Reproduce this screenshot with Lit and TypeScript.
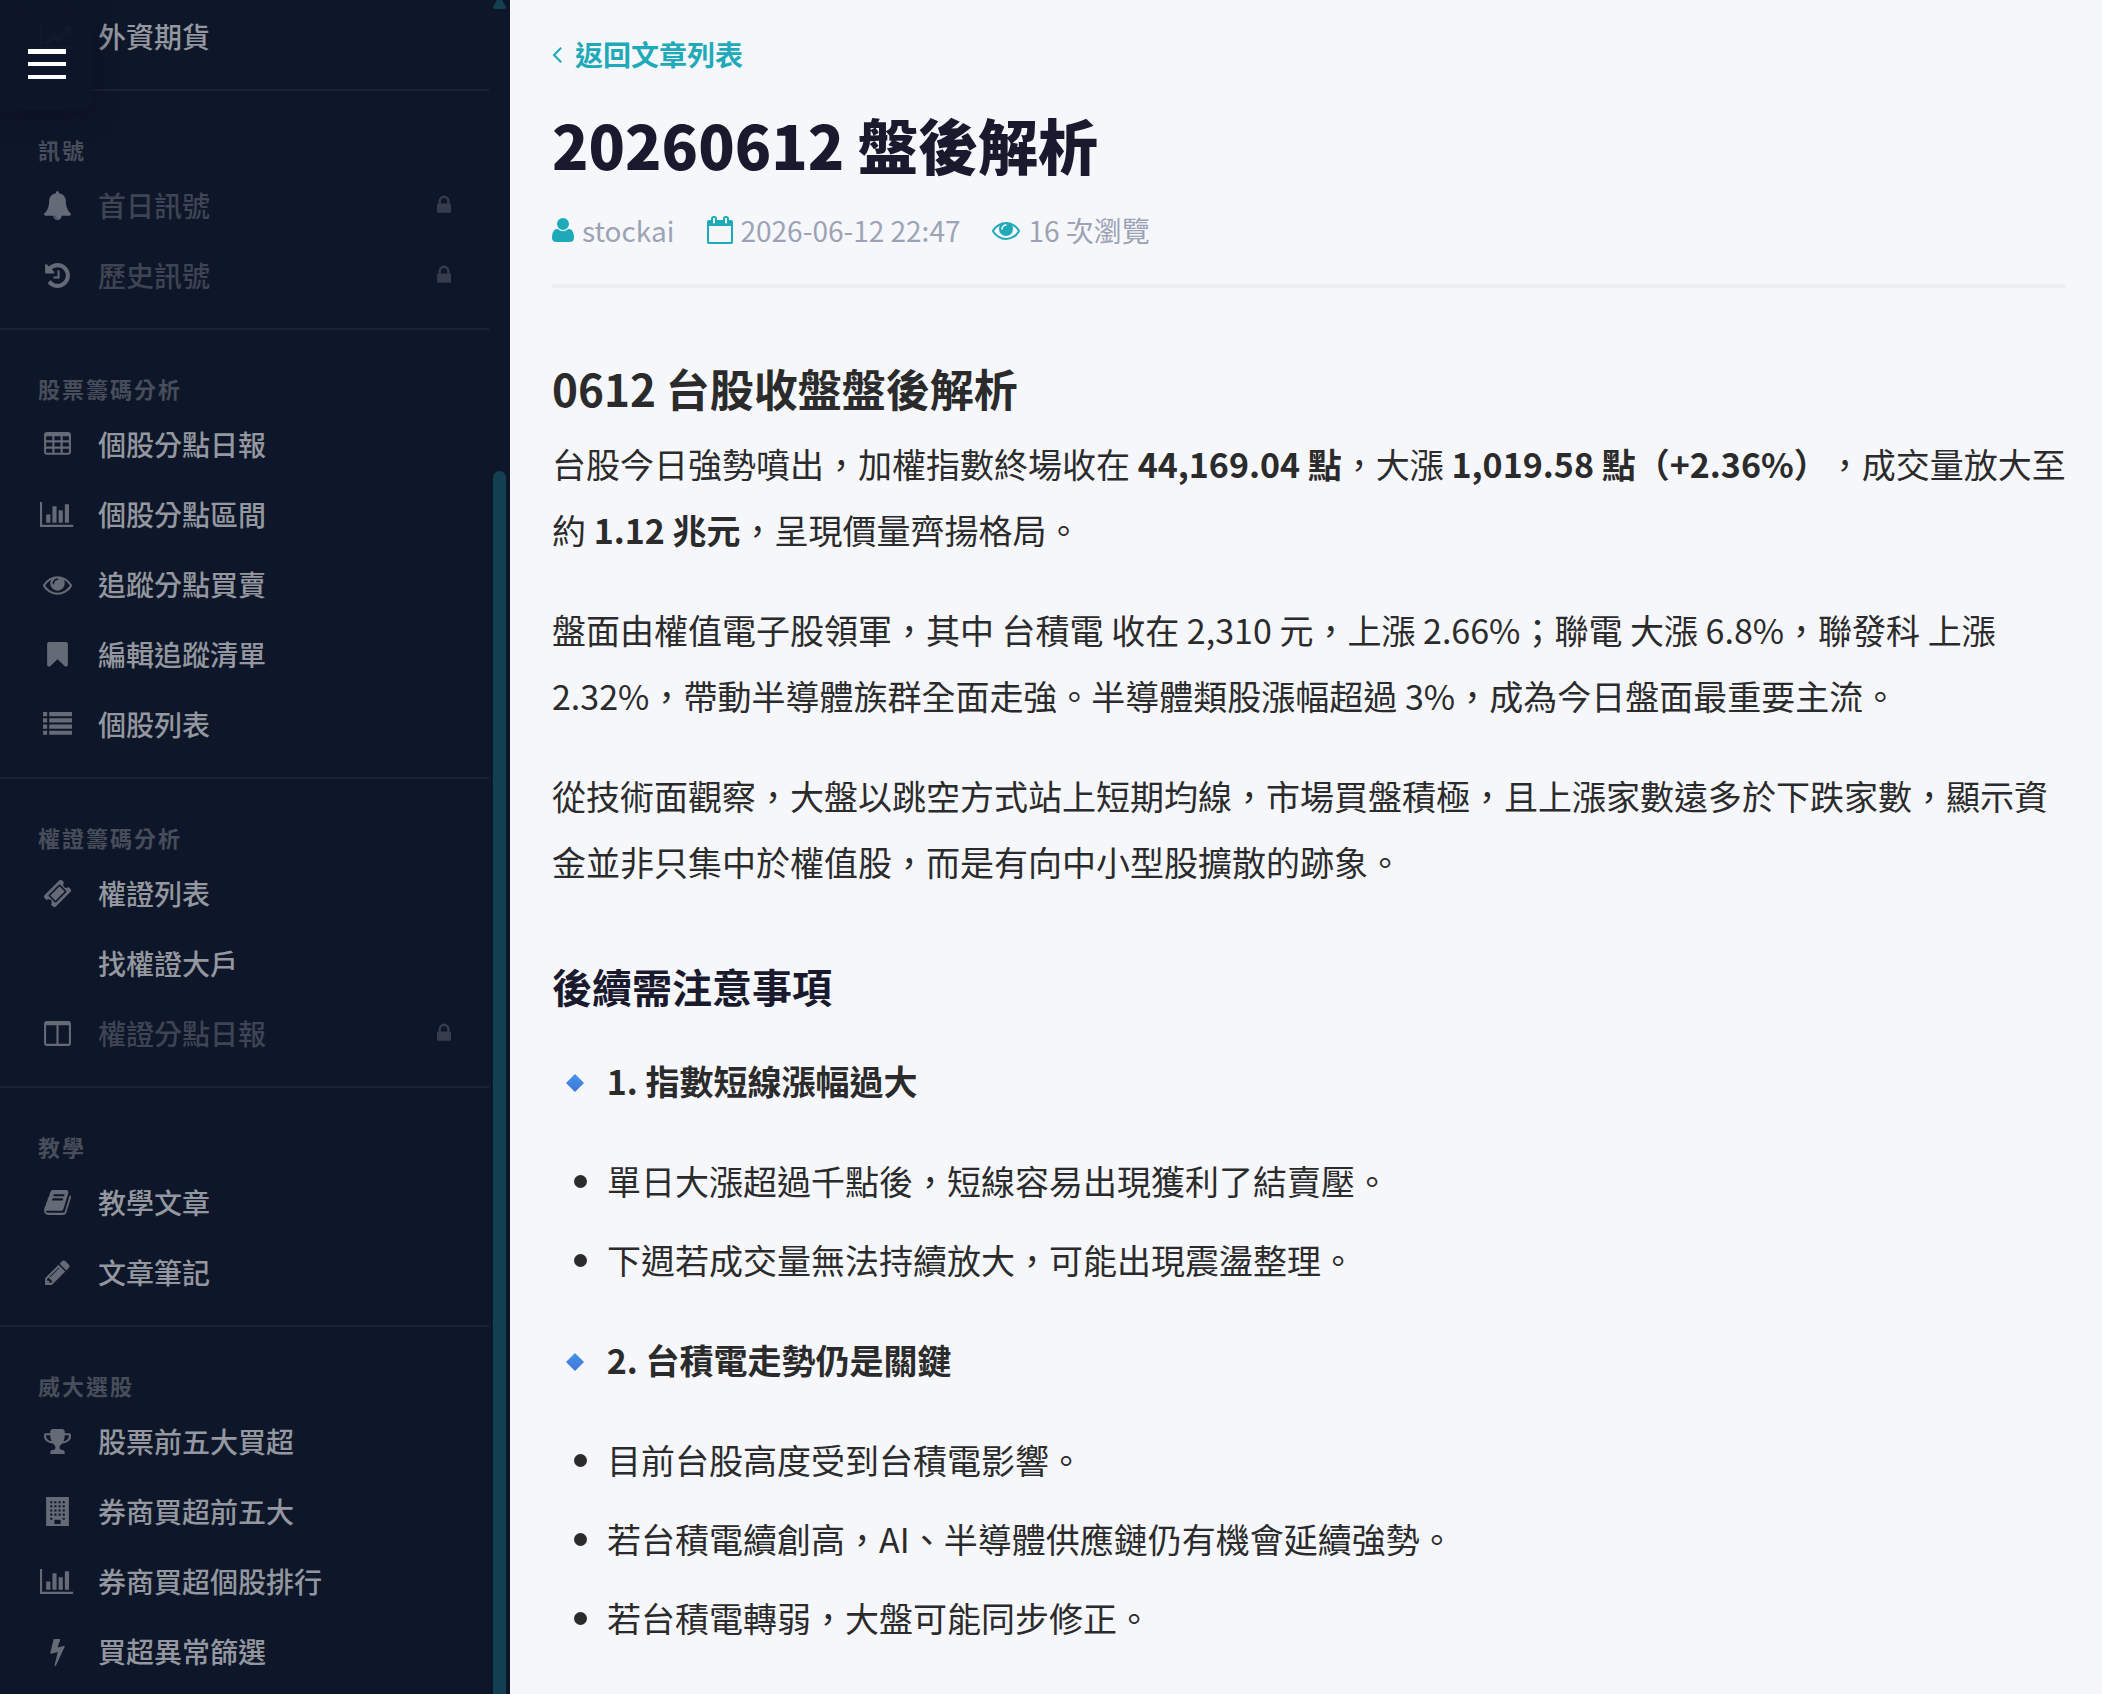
import { LitElement, html, svg, css, nothing } from "lit";
import { customElement, property } from "lit/decorators.js";

/* Each icon: [viewBox x, viewBox width, path]; all share a height of 1792 units per em. */
const ICONS: Record<string, [number, number, string]> = {
  line: [0, 2048, "M2048 1536v128h-2048v-1536h128v1408h1920zm-128-1248v435q0 21-19.5 29.5t-35.5-7.5l-121-121-633 633q-10 10-23 10t-23-10l-233-233-416 416-192-192 585-585q10-10 23-10t23 10l233 233 464-464-121-121q-16-16-7.5-35.5t29.5-19.5h435q14 0 23 9t9 23z"],
  bell: [0, 1792, "M912 1696q0-16-16-16-59 0-101.5-42.5t-42.5-101.5q0-16-16-16t-16 16q0 73 51.5 124.5t124.5 51.5q16 0 16-16zm816-288q0 52-38 90t-90 38h-448q0 106-75 181t-181 75-181-75-75-181h-448q-52 0-90-38t-38-90q50-42 91-88t85-119.5 74.5-158.5 50-206 19.5-260q0-152 117-282.5t307-158.5q-8-19-8-39 0-40 28-68t68-28 68 28 28 68q0 20-8 39 190 28 307 158.5t117 282.5q0 139 19.5 260t50 206 74.5 158.5 85 119.5 91 88z"],
  history: [0, 1792, "M1664 896q0 156-61 298t-164 245-245 164-298 61q-172 0-327-72.5t-264-204.5q-7-10-6.5-22.5t8.5-20.5l137-138q10-9 25-9 16 2 23 12 73 95 179 147t225 52q104 0 198.5-40.5t163.5-109.5 109.5-163.5 40.5-198.5-40.5-198.5-109.5-163.5-163.5-109.5-198.5-40.5q-98 0-188 35.5t-160 101.5l137 138q31 30 14 69-17 40-59 40h-448q-26 0-45-19t-19-45v-448q0-42 40-59 39-17 69 14l130 129q107-101 244.5-156.5t284.5-55.5q156 0 298 61t245 164 164 245 61 298zm-640-288v448q0 14-9 23t-23 9h-320q-14 0-23-9t-9-23v-64q0-14 9-23t23-9h224v-352q0-14 9-23t23-9h64q14 0 23 9t9 23z"],
  lock: [320, 1152, "M640 768h512v-192q0-106-75-181t-181-75-181 75-75 181v192zm832 96v576q0 40-28 68t-68 28h-960q-40 0-68-28t-28-68v-576q0-40 28-68t68-28h32v-192q0-184 132-316t316-132 316 132 132 316v192h32q40 0 68 28t28 68z"],
  table: [0, 1792, "M576 1376v-192q0-14-9-23t-23-9h-320q-14 0-23 9t-9 23v192q0 14 9 23t23 9h320q14 0 23-9t9-23zm0-384v-192q0-14-9-23t-23-9h-320q-14 0-23 9t-9 23v192q0 14 9 23t23 9h320q14 0 23-9t9-23zm512 384v-192q0-14-9-23t-23-9h-320q-14 0-23 9t-9 23v192q0 14 9 23t23 9h320q14 0 23-9t9-23zm-512-768v-192q0-14-9-23t-23-9h-320q-14 0-23 9t-9 23v192q0 14 9 23t23 9h320q14 0 23-9t9-23zm512 384v-192q0-14-9-23t-23-9h-320q-14 0-23 9t-9 23v192q0 14 9 23t23 9h320q14 0 23-9t9-23zm512 384v-192q0-14-9-23t-23-9h-320q-14 0-23 9t-9 23v192q0 14 9 23t23 9h320q14 0 23-9t9-23zm-512-768v-192q0-14-9-23t-23-9h-320q-14 0-23 9t-9 23v192q0 14 9 23t23 9h320q14 0 23-9t9-23zm512 384v-192q0-14-9-23t-23-9h-320q-14 0-23 9t-9 23v192q0 14 9 23t23 9h320q14 0 23-9t9-23zm0-384v-192q0-14-9-23t-23-9h-320q-14 0-23 9t-9 23v192q0 14 9 23t23 9h320q14 0 23-9t9-23zm128-320v1088q0 66-47 113t-113 47h-1344q-66 0-113-47t-47-113v-1088q0-66 47-113t113-47h1344q66 0 113 47t47 113z"],
  bars: [0, 2048, "M640 896v512h-256v-512h256zm384-512v1024h-256v-1024h256zm1024 1152v128h-2048v-1536h128v1408h1920zm-640-896v768h-256v-768h256zm384-384v1152h-256v-1152h256z"],
  eye: [0, 1792, "M1664 960q-152-236-381-353 61 104 61 225 0 185-131.5 316.5t-316.5 131.5-316.5-131.5-131.5-316.5q0-121 61-225-229 117-381 353 133 205 333.5 326.5t434.5 121.5 434.5-121.5 333.5-326.5zm-720-384q0-20-14-34t-34-14q-125 0-214.5 89.5t-89.5 214.5q0 20 14 34t34 14 34-14 14-34q0-86 61-147t147-61q20 0 34-14t14-34zm848 384q0 34-20 69-140 230-376.5 368.5t-499.5 138.5-499.5-139-376.5-368q-20-35-20-69t20-69q140-229 376.5-368t499.5-139 499.5 139 376.5 368q20 35 20 69z"],
  bookmark: [0, 1792, "M1420 128q23 0 44 9 33 13 52.5 41t19.5 62v1289q0 34-19.5 62t-52.5 41q-19 8-44 8-48 0-83-32l-441-424-441 424q-36 33-83 33-23 0-44-9-33-13-52.5-41t-19.5-62v-1289q0-34 19.5-62t52.5-41q21-9 44-9h1048z"],
  list: [0, 1792, "M0 128h256v256h-256zM384 128h1408v256h-1408zM0 512h256v256h-256zM384 512h1408v256h-1408zM0 896h256v256h-256zM384 896h1408v256h-1408zM0 1280h256v256h-256zM384 1280h1408v256h-1408z"],
  ticket: [0, 1792, "M1024 452l316 316-572 572-316-316zm-211 979l618-618q19-19 19-45t-19-45l-362-362q-18-18-45-18t-45 18l-618 618q-19 19-19 45t19 45l362 362q18 18 45 18t45-18zm889-637l-907 908q-37 37-90.5 37t-90.5-37l-126-126q56-56 56-136t-56-136-136-56-136 56l-125-126q-37-37-37-90.5t37-90.5l907-906q37-37 90.5-37t90.5 37l125 125q-56 56-56 136t56 136 136 56 136-56l126 125q37 37 37 90.5t-37 90.5z"],
  columns: [0, 1792, "M224 1536h608v-1152h-640v1120q0 13 9.5 22.5t22.5 9.5zm1376-32v-1120h-640v1152h608q13 0 22.5-9.5t9.5-22.5zm128-1216v1216q0 66-47 113t-113 47h-1344q-66 0-113-47t-47-113v-1216q0-66 47-113t113-47h1344q66 0 113 47t47 113z"],
  book: [0, 1792, "M1703 478q40 57 18 129l-275 906q-19 64-76.5 107.5t-122.5 43.5h-923q-77 0-148.5-53.5t-99.5-131.5q-24-67-2-127 0-4 3-27t4-37q1-8-3-21.5t-3-19.5q2-11 8-21t16.5-23.5 16.5-23.5q23-38 45-91.5t30-91.5q3-10 .5-30t-.5-28q3-11 17-28t17-23q21-36 42-92t25-90q1-9-2.5-32t.5-28q4-13 22-30.5t22-22.5q19-26 42.5-84.5t27.5-96.5q1-8-3-25.5t-2-26.5q2-8 9-18t18-23 17-21q8-12 16.5-30.5t15-35 16-36 19.5-32 26.5-23.5 36-11.5 47.5 5.5l-1 3q38-9 51-9h761q74 0 114 56t18 130l-274 906q-36 119-71.5 153.5t-128.5 34.5h-869q-27 0-38 15-11 16-1 43 24 70 144 70h923q29 0 56-15.5t35-41.5l300-987q7-22 5-57 38 15 59 43zm-1064 2q-4 13 2 22.5t20 9.5h608q13 0 25.5-9.5t16.5-22.5l21-64q4-13-2-22.5t-20-9.5h-608q-13 0-25.5 9.5t-16.5 22.5zm-83 256q-4 13 2 22.5t20 9.5h608q13 0 25.5-9.5t16.5-22.5l21-64q4-13-2-22.5t-20-9.5h-608q-13 0-25.5 9.5t-16.5 22.5z"],
  pencil: [0, 1792, "M491 1536l91-91-235-235-91 91v107h128v128h107zm523-928q0-22-22-22-10 0-17 7l-542 542q-7 7-7 17 0 22 22 22 10 0 17-7l542-542q7-7 7-17zm-54-192l416 416-832 832h-416v-416zm683 96q0 53-37 90l-166 166-416-416 166-165q36-38 90-38 53 0 91 38l235 234q37 39 37 91z"],
  trophy: [0, 1792, "M522 883q-74-162-74-371h-256v96q0 78 94.5 162t235.5 113zm1078-275v-96h-256q0 209-74 371 141-29 235.5-113t94.5-162zm128-128v128q0 71-41.5 143t-112 130-173 97.5-215.5 44.5q-42 54-95 95-38 34-52.5 72.5t-14.5 89.5q0 54 30.5 91t97.5 37q75 0 133.5 45.5t58.5 114.5v64q0 14-9 23t-23 9h-832q-14 0-23-9t-9-23v-64q0-69 58.5-114.5t133.5-45.5q67 0 97.5-37t30.5-91q0-51-14.5-89.5t-52.5-72.5q-53-41-95-95-113-5-215.5-44.5t-173-97.5-112-130-41.5-143v-128q0-40 28-68t68-28h288v-96q0-66 47-113t113-47h576q66 0 113 47t47 113v96h288q40 0 68 28t28 68z"],
  building: [0, 1792, "M192 0h1408v1792h-1408z" +
    [256, 512, 768, 1024, 1280].flatMap((y) => [448, 704, 960, 1216].filter((x) => y < 1280 || x < 704 || x > 960).map((x) => `M${x} ${y}v128h128v-128z`)).join("") +
    "M704 1408v256h384v-256z"],
  bolt: [0, 1792, "M1333 566q18 20 7 44l-540 1157q-13 25-42 25-4 0-14-2-17-5-25.5-19t-4.5-30l197-808-406 101q-4 1-12 1-18 0-31-11-18-15-13-39l201-825q4-14 16-23t28-9h328q19 0 32 12.5t13 29.5q0 8-5 18l-171 463 396-98q8-2 12-2 19 0 34 15z"],
  user: [192, 1408, "M1600 1405q0 120-73 189.5t-194 69.5h-874q-121 0-194-69.5t-73-189.5q0-53 3.5-103.5t14-109 26.5-108.5 43-97.5 62-81 85.5-53.5 111.5-20q9 0 42 21.5t74.5 48 108 48 133.5 21.5 133.5-21.5 108-48 74.5-48 42-21.5q61 0 111.5 20t85.5 53.5 62 81 43 97.5 26.5 108.5 14 109 3.5 103.5zm-320-893q0 159-112.5 271.5t-271.5 112.5-271.5-112.5-112.5-271.5 112.5-271.5 271.5-112.5 271.5 112.5 112.5 271.5z"],
  calendar: [64, 1664, "M192 1664h1408v-1024h-1408v1024zm384-1216v-288q0-14-9-23t-23-9h-64q-14 0-23 9t-9 23v288q0 14 9 23t23 9h64q14 0 23-9t9-23zm768 0v-288q0-14-9-23t-23-9h-64q-14 0-23 9t-9 23v288q0 14 9 23t23 9h64q14 0 23-9t9-23zm384-64v1280q0 52-38 90t-90 38h-1408q-52 0-90-38t-38-90v-1280q0-52 38-90t90-38h128v-96q0-66 47-113t113-47h64q66 0 113 47t47 113v96h384v-96q0-66 47-113t113-47h64q66 0 113 47t47 113v96h128q52 0 90 38t38 90z"],
  back: [576, 640, "M1203 544q0 13-10 23l-393 393 393 393q10 10 10 23t-10 23l-50 50q-10 10-23 10t-23-10l-466-466q-10-10-10-23t10-23l466-466q10-10 23-10t23 10l50 50q10 10 10 23z"],
};

@customElement("app-icon")
class AppIcon extends LitElement {
  @property() name = "";
  static styles = css`
    :host { display: inline-flex; flex: none; }
    svg { height: 1em; width: auto; fill: currentColor; }
  `;
  render() {
    const icon = ICONS[this.name];
    if (!icon) return nothing;
    const [x, w, d] = icon;
    return html`<svg viewBox="${x} 0 ${w} 1792" aria-hidden="true">${svg`<path fill-rule=${this.name === "building" ? "evenodd" : "nonzero"} d=${d}></path>`}</svg>`;
  }
}

interface Entry { icon?: string; label: string; locked?: boolean }
interface Group { title?: string; items: Entry[] }

const GROUPS: Group[] = [
  { items: [{ icon: "line", label: "外資期貨" }] },
  { title: "訊號", items: [
    { icon: "bell", label: "首日訊號", locked: true },
    { icon: "history", label: "歷史訊號", locked: true },
  ] },
  { title: "股票籌碼分析", items: [
    { icon: "table", label: "個股分點日報" },
    { icon: "bars", label: "個股分點區間" },
    { icon: "eye", label: "追蹤分點買賣" },
    { icon: "bookmark", label: "編輯追蹤清單" },
    { icon: "list", label: "個股列表" },
  ] },
  { title: "權證籌碼分析", items: [
    { icon: "ticket", label: "權證列表" },
    { label: "找權證大戶" },
    { icon: "columns", label: "權證分點日報", locked: true },
  ] },
  { title: "教學", items: [
    { icon: "book", label: "教學文章" },
    { icon: "pencil", label: "文章筆記" },
  ] },
  { title: "威大選股", items: [
    { icon: "trophy", label: "股票前五大買超" },
    { icon: "building", label: "券商買超前五大" },
    { icon: "bars", label: "券商買超個股排行" },
    { icon: "bolt", label: "買超異常篩選" },
  ] },
];

@customElement("side-menu")
class SideMenu extends LitElement {
  static styles = css`
    :host { display: flex; gap: 4px; padding-right: 4px; background: #0e1729; overflow: hidden; }
    nav { flex: 1; min-width: 0; padding-top: 3px; }
    .group { border-bottom: 2px solid #1b2435; padding-bottom: 16px; }
    .group:last-child { border-bottom: 0; }
    .title { margin: 0; padding: 42px 38px 7px; font-size: 22px; line-height: 32px; font-weight: 700; letter-spacing: 2px; color: #474d5b; }
    ul { list-style: none; margin: 0; padding: 0; }
    .item { display: flex; align-items: center; box-sizing: border-box; height: 70px; padding: 0 38px 4px; color: #94979f; font-size: 28px; font-weight: 500; text-decoration: none; }
    .glyph { display: flex; justify-content: center; width: 38px; margin-right: 22px; color: #656a77; font-size: 29px; }
    .label { flex: 1; }
    .locked { color: #3e4453; }
    .lock { font-size: 22px; color: #353c4b; }
    .rail { display: flex; flex-direction: column; width: 13px; color: #134152; }
    .arrow { display: block; width: 13px; height: 9px; fill: currentColor; }
    .track { flex: 0 0 462px; }
    .thumb { flex: 1; background: currentColor; border-radius: 7px 7px 0 0; }
  `;
  render() {
    return html`
      <nav>
        ${GROUPS.map((g) => html`
          <section class="group">
            ${g.title ? html`<h2 class="title">${g.title}</h2>` : nothing}
            <ul>
              ${g.items.map((i) => html`<li><a class="item ${i.locked ? "locked" : ""}" href="#">
                <span class="glyph">${i.icon ? html`<app-icon name=${i.icon}></app-icon>` : nothing}</span>
                <span class="label">${i.label}</span>
                ${i.locked ? html`<app-icon class="lock" name="lock"></app-icon>` : nothing}
              </a></li>`)}
            </ul>
          </section>`)}
      </nav>
      <div class="rail">
        <svg class="arrow" viewBox="0 0 13 9"><path d="M4 0h5l4 7q0 2-2 2h-9q-2 0-2-2z"></path></svg>
        <div class="track"></div>
        <div class="thumb"></div>
      </div>
    `;
  }
}

@customElement("article-page")
class ArticlePage extends LitElement {
  static styles = css`
    :host { display: block; padding: 34px 36px 36px 42px; color: #2b2b2b; font-size: 34px; line-height: 66px; text-spacing-trim: space-all; }
    .back { display: flex; align-items: center; gap: 13px; width: max-content; font-size: 28px; line-height: 40px; font-weight: 700; color: #1eaab9; text-decoration: none; }
    h1 { margin: 30px 0 26px; font-size: 60px; line-height: 80px; font-weight: 800; color: #1a1a2e; }
    .meta { display: flex; align-items: center; gap: 32px; padding-bottom: 34px; border-bottom: 4px solid #eceef2; font-size: 28px; line-height: 40px; color: #9ca3b4; }
    .fact { display: flex; align-items: center; gap: 8px; }
    .fact app-icon { color: #1eaab9; }
    h2 { margin: 70px 0 13px; font-size: 44px; line-height: 60px; }
    p { margin: 0 0 34px; }
    h3 { margin: 63px 0 34px; font-size: 40px; line-height: 56px; color: #1a1a2e; }
    ul { margin: 0 0 34px; padding-left: 55px; }
    li + li { margin-top: 13px; }
    .diamond { width: 47px; height: 34px; vertical-align: -4px; }
  `;
  private point(id: string, text: string) {
    return html`<p><svg class="diamond" viewBox="0 0 47 34" aria-hidden="true">
      <defs><linearGradient id=${id} x1="0" y1="0" x2="0" y2="1"><stop offset="0" stop-color="#4596e8"></stop><stop offset="1" stop-color="#3f73d8"></stop></linearGradient></defs>
      <path fill="url(#${id})" d="M23 9l9 9-9 9-9-9z"></path></svg> <strong>${text}</strong></p>`;
  }
  render() {
    return html`
      <a class="back" href="#"><app-icon name="back"></app-icon>返回文章列表</a>
      <h1>20260612 盤後解析</h1>
      <div class="meta">
        <span class="fact"><app-icon name="user"></app-icon>stockai</span>
        <span class="fact"><app-icon name="calendar"></app-icon>2026-06-12 22:47</span>
        <span class="fact"><app-icon name="eye"></app-icon>16 次瀏覽</span>
      </div>
      <h2>0612 台股收盤盤後解析</h2>
      <p>台股今日強勢噴出，加權指數終場收在 <strong>44,169.04 點</strong>，大漲 <strong>1,019.58 點（+2.36%）</strong>，成交量放大至約 <strong>1.12 兆元</strong>，呈現價量齊揚格局。</p>
      <p>盤面由權值電子股領軍，其中 台積電 收在 2,310 元，上漲 2.66%；聯電 大漲 6.8%，聯發科 上漲 2.32%，帶動半導體族群全面走強。半導體類股漲幅超過 3%，成為今日盤面最重要主流。</p>
      <p>從技術面觀察，大盤以跳空方式站上短期均線，市場買盤積極，且上漲家數遠多於下跌家數，顯示資金並非只集中於權值股，而是有向中小型股擴散的跡象。</p>
      <h3>後續需注意事項</h3>
      ${this.point("d1", "1. 指數短線漲幅過大")}
      <ul>
        <li>單日大漲超過千點後，短線容易出現獲利了結賣壓。</li>
        <li>下週若成交量無法持續放大，可能出現震盪整理。</li>
      </ul>
      ${this.point("d2", "2. 台積電走勢仍是關鍵")}
      <ul>
        <li>目前台股高度受到台積電影響。</li>
        <li>若台積電續創高，AI、半導體供應鏈仍有機會延續強勢。</li>
        <li>若台積電轉弱，大盤可能同步修正。</li>
      </ul>
    `;
  }
}

@customElement("app-root")
class AppRoot extends LitElement {
  static styles = css`
    :host { display: grid; grid-template-columns: 510px minmax(0, 1fr); position: relative; height: 100vh; overflow: hidden; background: #f6f7fb; font-family: "Noto Sans CJK TC", "Noto Sans", sans-serif; }
    .toggle { position: absolute; left: 0; top: 17px; display: flex; flex-direction: column; justify-content: center; gap: 8px; width: 93px; height: 94px; padding: 0 27px 0 28px; border: 0; border-radius: 0 16px 16px 0; background: rgba(14, 23, 41, 0.96); box-shadow: 0 4px 24px rgba(10, 14, 30, 0.8); }
    .toggle span { height: 5px; background: #fff; }
    .toggle span + span { height: 4px; }
    .toggle span + span + span { margin-top: 1px; }
  `;
  render() {
    return html`
      <side-menu lang="zh-Hant"></side-menu>
      <article-page lang="zh-Hant"></article-page>
      <button class="toggle" aria-label="選單"><span></span><span></span><span></span></button>
    `;
  }
}
